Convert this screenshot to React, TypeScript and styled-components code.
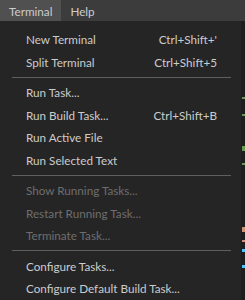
import * as React from 'react';
import styled, { createGlobalStyle } from 'styled-components';

const GlobalStyle = createGlobalStyle`
    html, body {
        margin: 0;
        padding: 0;
        background: #1e1e1e;
        overflow: hidden;
    }
`;

const Screen = styled.div`
    width: 245px;
    height: 300px;
    display: flex;
    flex-direction: column;
    font-family: Lato, "Noto Sans", sans-serif;
    font-size: 11.7px;
    color: #cccccc;
    overflow: hidden;
`;

const MenuBar = styled.div`
    height: 21px;
    flex-shrink: 0;
    display: flex;
    background: #3c3c3c;
`;

const BarItem = styled.div<{ $open?: boolean }>`
    display: flex;
    align-items: center;
    padding: 0 9px;
    background: ${p => (p.$open ? '#505050' : 'transparent')};
`;

const Body = styled.div`
    flex: 1;
    display: flex;
    min-height: 0;
`;

const Menu = styled.div`
    width: 241px;
    flex-shrink: 0;
    display: flex;
    flex-direction: column;
    padding-top: 7px;
    background: #252526;
    box-shadow: 1px 0 0 #1b1b1c;
`;

const Item = styled.div<{ $disabled?: boolean }>`
    height: 22.5px;
    flex-shrink: 0;
    display: flex;
    align-items: center;
    justify-content: space-between;
    padding: 0 24px 0 26px;
    color: ${p => (p.$disabled ? '#6e6e6e' : '#cccccc')};
    white-space: nowrap;
`;

const Shortcut = styled.span`
    color: #cccccc;
`;

const Separator = styled.div`
    height: 8px;
    flex-shrink: 0;
    display: flex;
    align-items: center;
    padding: 0 10px 0 12px;

    &::after {
        content: '';
        flex: 1;
        height: 1px;
        background: #5f5f5f;
    }
`;

const Editor = styled.div`
    flex: 1;
    display: flex;
    flex-direction: column;
    padding-left: 1px;
    background: #1e1e1e;
`;

const Mark = styled.div<{ $top: number; $color: string; $h?: number }>`
    margin-top: ${p => p.$top}px;
    width: 3px;
    height: ${p => p.$h ?? 2}px;
    background: ${p => p.$color};
`;

type Entry =
    | { kind: 'item'; label: string; shortcut?: string; disabled?: boolean }
    | { kind: 'sep' };

const entries: Entry[] = [
    { kind: 'item', label: 'New Terminal', shortcut: "Ctrl+Shift+'" },
    { kind: 'item', label: 'Split Terminal', shortcut: 'Ctrl+Shift+5' },
    { kind: 'sep' },
    { kind: 'item', label: 'Run Task...' },
    { kind: 'item', label: 'Run Build Task...', shortcut: 'Ctrl+Shift+B' },
    { kind: 'item', label: 'Run Active File' },
    { kind: 'item', label: 'Run Selected Text' },
    { kind: 'sep' },
    { kind: 'item', label: 'Show Running Tasks...', disabled: true },
    { kind: 'item', label: 'Restart Running Task...', disabled: true },
    { kind: 'item', label: 'Terminate Task...', disabled: true },
    { kind: 'sep' },
    { kind: 'item', label: 'Configure Tasks...' },
    { kind: 'item', label: 'Configure Default Build Task...' },
];

const App = () => {
    return (
        <Screen>
            <GlobalStyle />
            <MenuBar>
                <BarItem $open>Terminal</BarItem>
                <BarItem>Help</BarItem>
            </MenuBar>
            <Body>
                <Menu>
                    {entries.map((e, i) =>
                        e.kind === 'sep' ? (
                            <Separator key={i} />
                        ) : (
                            <Item key={i} $disabled={e.disabled}>
                                <span>{e.label}</span>
                                {e.shortcut && <Shortcut>{e.shortcut}</Shortcut>}
                            </Item>
                        )
                    )}
                </Menu>
                <Editor>
                    <Mark $top={76} $color="#6a9955" />
                    <Mark $top={15} $color="#6a9955" />
                    <Mark $top={30} $color="#6a9955" $h={5} />
                    <Mark $top={12} $color="#6a9955" />
                    <Mark $top={62} $color="#ce9178" $h={5} />
                    <Mark $top={8} $color="#ce9178" $h={2} />
                    <Mark $top={7} $color="#4fc1ff" $h={3} />
                    <Mark $top={13} $color="#4fc1ff" $h={3} />
                </Editor>
            </Body>
        </Screen>
    );
};

export default App;
